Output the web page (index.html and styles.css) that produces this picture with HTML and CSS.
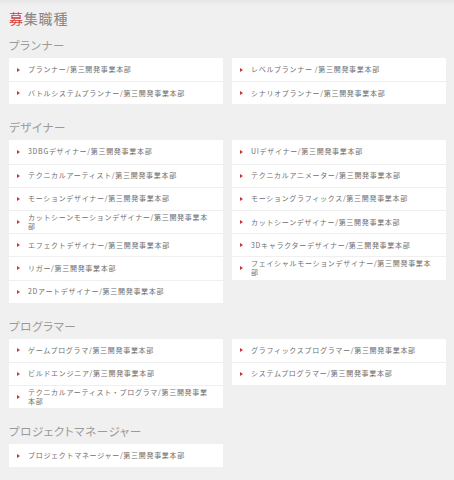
FILE: index.html
```html
<!DOCTYPE html>
<html lang="ja">
<head>
    <meta charset="UTF-8">
    <meta name="viewport" content="width=device-width, initial-scale=1.0">
    <title>募集職種</title>
    <link rel="stylesheet" href="styles.css">
</head>
<body>
    <div class="page">
        <h1 class="page-title"><span class="accent">募</span>集職種</h1>

        <section class="job-group">
            <h2 class="group-title">プランナー</h2>
            <div class="job-columns">
                <ul class="job-list">
                    <li><a href="#">プランナー/第三開発事業本部</a></li>
                    <li><a href="#">バトルシステムプランナー/第三開発事業本部</a></li>
                </ul>
                <ul class="job-list">
                    <li><a href="#">レベルプランナー /第三開発事業本部</a></li>
                    <li><a href="#">シナリオプランナー/第三開発事業本部</a></li>
                </ul>
            </div>
        </section>

        <section class="job-group">
            <h2 class="group-title">デザイナー</h2>
            <div class="job-columns">
                <ul class="job-list">
                    <li><a href="#">3DBGデザイナー/第三開発事業本部</a></li>
                    <li><a href="#">テクニカルアーティスト/第三開発事業本部</a></li>
                    <li><a href="#">モーションデザイナー/第三開発事業本部</a></li>
                    <li><a href="#">カットシーンモーションデザイナー/第三開発事業本部</a></li>
                    <li><a href="#">エフェクトデザイナー/第三開発事業本部</a></li>
                    <li><a href="#">リガー/第三開発事業本部</a></li>
                    <li><a href="#">2Dアートデザイナー/第三開発事業本部</a></li>
                </ul>
                <ul class="job-list">
                    <li><a href="#">UIデザイナー/第三開発事業本部</a></li>
                    <li><a href="#">テクニカルアニメーター/第三開発事業本部</a></li>
                    <li><a href="#">モーショングラフィックス/第三開発事業本部</a></li>
                    <li><a href="#">カットシーンデザイナー/第三開発事業本部</a></li>
                    <li><a href="#">3Dキャラクターデザイナー/第三開発事業本部</a></li>
                    <li><a href="#">フェイシャルモーションデザイナー/第三開発事業本部</a></li>
                </ul>
            </div>
        </section>

        <section class="job-group">
            <h2 class="group-title">プログラマー</h2>
            <div class="job-columns">
                <ul class="job-list">
                    <li><a href="#">ゲームプログラマ/第三開発事業本部</a></li>
                    <li><a href="#">ビルドエンジニア/第三開発事業本部</a></li>
                    <li><a href="#">テクニカルアーティスト・プログラマ/第三開発事業本部</a></li>
                </ul>
                <ul class="job-list">
                    <li><a href="#">グラフィックスプログラマー/第三開発事業本部</a></li>
                    <li><a href="#">システムプログラマー/第三開発事業本部</a></li>
                </ul>
            </div>
        </section>

        <section class="job-group">
            <h2 class="group-title">プロジェクトマネージャー</h2>
            <div class="job-columns">
                <ul class="job-list">
                    <li><a href="#">プロジェクトマネージャー/第三開発事業本部</a></li>
                </ul>
            </div>
        </section>
    </div>
</body>
</html>
```

FILE: styles.css
```css
html {
    background: #f0f0f0;
}
body {
    margin: 0;
    padding: 0;
    font-family: "Noto Sans CJK JP", "Noto Sans", sans-serif;
    background: #f0f0f0 linear-gradient(#e6e6e6, #f0f0f0) no-repeat;
    background-size: 100% 6px;
    color: #666;
}
.page {
    padding: 8px 8px 0 9px;
}
.page-title {
    margin: 0;
    font-size: 14px;
    line-height: 20px;
    font-weight: normal;
    letter-spacing: 0.8px;
    color: #858585;
}
.accent {
    color: #d8403a;
}
.group-title {
    margin: 10px 0 6px;
    font-size: 11.5px;
    line-height: 14px;
    font-weight: normal;
    letter-spacing: 0.6px;
    font-feature-settings: "palt";
    color: #9a9a9a;
}
.job-group + .job-group .group-title {
    margin-top: 16px;
}
.job-columns {
    display: grid;
    grid-template-columns: 1fr 1fr;
    column-gap: 9px;
    align-items: start;
}
.job-list {
    list-style: none;
    margin: 0;
    padding: 0;
    background: #fff;
}
.job-list li {
    box-sizing: border-box;
    height: 23.2px;
    display: flex;
    align-items: center;
    padding: 0 8px;
    border-top: 1px solid #efefef;
}
.job-list li:first-child {
    border-top: none;
}
.job-list li::before {
    content: "";
    flex: none;
    width: 0;
    height: 0;
    margin-right: 8px;
    border-left: 3px solid #c8343a;
    border-top: 2px solid transparent;
    border-bottom: 2px solid transparent;
}
.job-list a {
    font-size: 7px;
    line-height: 9px;
    letter-spacing: 0.7px;
    color: #6e6e6e;
    text-decoration: none;
}
```
